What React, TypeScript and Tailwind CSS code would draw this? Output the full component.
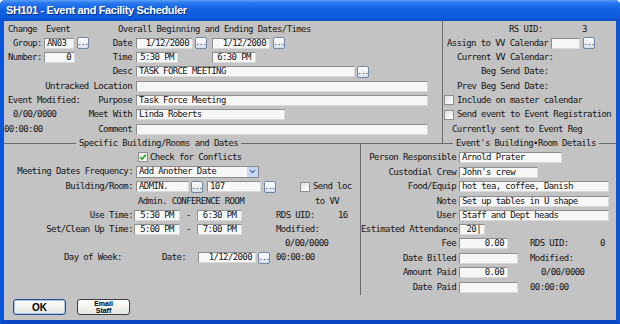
import { ChevronDown } from "lucide-react";
import type { ReactNode } from "react";

// shared text style for the form body (narrow pixel-like mono)
const mono =
  "font-['DejaVu_Sans_Mono','Liberation_Mono',monospace] text-[9px] leading-[11px] tracking-[-0.6px] text-[#141414] whitespace-nowrap";

function Field({
  className,
  value = "",
  align = "left",
}: {
  className: string;
  value?: string;
  align?: "left" | "right" | "center";
}) {
  const justify =
    align === "right" ? "justify-end pr-[3px]" : align === "center" ? "justify-center" : "justify-start pl-[2px]";
  return (
    <div
      className={`${className} flex h-[11px] shrink-0 items-center overflow-hidden border border-t-[#8c8c8c] border-l-[#8c8c8c] border-r-[#d8d8d8] border-b-[#d8d8d8] bg-[#f7f7f7] ${justify}`}
    >
      {value}
    </div>
  );
}

function Dots({ className = "" }: { className?: string }) {
  return (
    <div
      className={`${className} flex h-[12px] w-[12px] shrink-0 items-end justify-center rounded-[2px] border border-[#6f86a8] bg-gradient-to-b from-white to-[#d7e0ec] pb-[1px] text-[7px] leading-[7px] tracking-[-0.5px]`}
    >
      ...
    </div>
  );
}

function Check({ checked = false, className = "" }: { checked?: boolean; className?: string }) {
  return (
    <div
      className={`${className} flex h-[10px] w-[10px] shrink-0 items-center justify-center border border-[#8f8f8f] bg-gradient-to-br from-[#e4e4e4] to-white`}
    >
      {checked && (
        <svg width="8" height="8" viewBox="0 0 8 8">
          <path d="M1.2 4.2l1.8 1.9 3.8-4.4" stroke="#22a322" strokeWidth="1.6" fill="none" />
        </svg>
      )}
    </div>
  );
}

function Row({ tall = false, className = "", children }: { tall?: boolean; className?: string; children: ReactNode }) {
  return <div className={`${tall ? "h-[15px]" : "h-[14px]"} flex items-center ${className}`}>{children}</div>;
}

function RightLabel({ label, children }: { label: string; children: ReactNode }) {
  return (
    <>
      <span className="w-[95px] shrink-0 text-right">{label}</span>
      <span className="ml-[3px] flex items-center">{children}</span>
    </>
  );
}

export default function App() {
  return (
    <div className="flex h-[324px] w-[620px] flex-col overflow-hidden rounded-t-[5px] bg-[#0b55d8]">
      {/* Title bar */}
      <div className="flex h-[21px] shrink-0 items-center bg-[linear-gradient(to_bottom,#5aa0fa_0%,#2a78ee_14%,#1162e2_45%,#0c5bdc_80%,#0a4dc9_100%)] pl-[6px]">
        <span className="font-['Liberation_Sans',Arial,sans-serif] text-[11px] font-bold tracking-[-0.35px] text-white [text-shadow:1px_1px_0_#0a2f80]">
          SH101 - Event and Facility Scheduler
        </span>
      </div>

      {/* Window body */}
      <div className={`flex flex-1 flex-col border-x-4 border-b-4 border-x-[#0b55d8] border-b-[#0a47c4] bg-[#c3c3c3] ${mono}`}>
        {/* Top section */}
        <div className="flex h-[123px] shrink-0">
          {/* Top left */}
          <div className="w-[438px] shrink-0 pt-[1px]">
            <Row className="pl-[4px]">
              <span className="w-[38px]">Change</span>
              <span className="w-[72px]">Event</span>
              <span>Overall Beginning and Ending Dates/Times</span>
            </Row>
            <Row>
              <div className="flex w-[128px] items-center">
                <span className="w-[40px] pl-[9px]">Group:</span>
                <Field className="w-[30px]" value="AN03" />
                <Dots className="ml-[3px]" />
                <span className="flex-1 text-right">Date</span>
              </div>
              <Field className="ml-[4px] w-[57px]" value="1/12/2000" align="right" />
              <Dots className="ml-[2px]" />
              <Field className="ml-[5px] w-[58px]" value="1/12/2000" align="right" />
              <Dots className="ml-[3px]" />
            </Row>
            <Row>
              <div className="flex w-[128px] items-center">
                <span className="w-[40px] pl-[4px]">Number:</span>
                <Field className="w-[31px]" value="0" align="right" />
                <span className="flex-1 text-right">Time</span>
              </div>
              <Field className="ml-[4px] w-[42px]" value="5:30 PM" align="center" />
              <Field className="ml-[34px] w-[44px]" value="6:30 PM" align="center" />
            </Row>
            <Row tall>
              <span className="w-[128px] text-right">Desc</span>
              <Field className="ml-[4px] w-[219px]" value="TASK FORCE MEETING" />
              <Dots className="ml-[2px]" />
            </Row>
            <Row>
              <span className="w-[128px] text-right">Untracked Location</span>
              <Field className="ml-[4px] w-[292px]" />
            </Row>
            <Row>
              <div className="flex w-[128px] justify-between">
                <span className="pl-[4px]">Event Modified:</span>
                <span>Purpose</span>
              </div>
              <Field className="ml-[4px] w-[292px]" value="Task Force Meeting" />
            </Row>
            <Row tall>
              <div className="flex w-[128px] justify-between">
                <span className="pl-[9px]">0/00/0000</span>
                <span>Meet With</span>
              </div>
              <Field className="ml-[4px] w-[149px]" value="Linda Roberts" />
            </Row>
            <Row>
              <div className="flex w-[128px] justify-between">
                <span>00:00:00</span>
                <span>Comment</span>
              </div>
              <Field className="ml-[4px] w-[292px]" />
            </Row>
          </div>

          {/* Top right */}
          <div className="flex-1 border-l border-[#6b6b6b] pt-[1px]">
            <Row className="pl-[66px]">
              <span className="w-[73px]">RS UID:</span>
              <span>3</span>
            </Row>
            <Row className="pl-[4px]">
              <span>Assign to VV Calendar</span>
              <Field className="ml-[3px] w-[29px]" />
              <Dots className="ml-[3px]" />
            </Row>
            <Row className="pl-[14px]">Current VV Calendar:</Row>
            <Row tall className="pl-[38px]">
              Beg Send Date:
            </Row>
            <Row className="pl-[14px]">Prev Beg Send Date:</Row>
            <Row className="pl-[1px]">
              <Check />
              <span className="ml-[3px]">Include on master calendar</span>
            </Row>
            <Row tall className="pl-[1px]">
              <Check />
              <span className="ml-[3px]">Send event to Event Registration</span>
            </Row>
            <Row className="pl-[9px]">Currently sent to Event Reg</Row>
          </div>
        </div>

        {/* Bottom group boxes */}
        <div className="-mt-[6px] flex h-[157px] shrink-0">
          <fieldset className="h-full w-[356px] shrink-0 border-t border-[#6b6b6b] pt-[1px]">
            <legend className="ml-[72px] px-[3px] leading-[11px]">Specific Building/Rooms and Dates</legend>
            <Row className="pl-[134px]">
              <Check checked />
              <span className="ml-[2px]">Check for Conflicts</span>
            </Row>
            <Row tall>
              <span className="w-[129px] text-right">Meeting Dates Frequency:</span>
              <div className="ml-[3px] flex h-[12px] w-[123px] items-center border border-[#8c8c8c] bg-[#f7f7f7] pl-[2px]">
                <span className="flex-1">Add Another Date</span>
                <div className="flex h-[10px] w-[11px] items-center justify-center rounded-[1px] bg-[#c7d6f7]">
                  <ChevronDown size={9} strokeWidth={3.2} color="#4a5f8f" />
                </div>
              </div>
            </Row>
            <Row tall>
              <span className="w-[129px] text-right">Building/Room:</span>
              <Field className="ml-[3px] w-[53px]" value="ADMIN." />
              <Dots className="ml-[2px]" />
              <Field className="ml-[4px] w-[54px]" value="107" />
              <Dots className="ml-[3px]" />
              <Check className="ml-[24px]" />
              <span className="ml-[3px]">Send loc</span>
            </Row>
            <Row className="pl-[134px]">
              <span className="w-[177px]">Admin. CONFERENCE ROOM</span>
              <span>to VV</span>
            </Row>
            <Row>
              <span className="w-[129px] text-right">Use Time:</span>
              <Field className="ml-[1px] w-[46px]" value="5:30 PM" align="center" />
              <span className="w-[17px] text-center">-</span>
              <Field className="w-[45px]" value="6:30 PM" align="center" />
              <span className="ml-[34px] w-[62px]">RDS UID:</span>
              <span>16</span>
            </Row>
            <Row>
              <span className="w-[129px] text-right">Set/Clean Up Time:</span>
              <Field className="ml-[1px] w-[46px]" value="5:00 PM" align="center" />
              <span className="w-[17px] text-center">-</span>
              <Field className="w-[45px]" value="7:00 PM" align="center" />
              <span className="ml-[34px]">Modified:</span>
            </Row>
            <Row className="pl-[281px]">0/00/0000</Row>
            <Row tall className="pl-[60px]">
              <span className="w-[98px]">Day of Week:</span>
              <span className="w-[36px]">Date:</span>
              <Field className="w-[58px]" value="1/12/2000" align="right" />
              <Dots className="ml-[2px]" />
              <span className="ml-[6px]">00:00:00</span>
            </Row>
          </fieldset>

          <fieldset className="h-full flex-1 border-t border-l border-[#6b6b6b] pt-[1px]">
            <legend className="ml-[92px] px-[3px] leading-[11px]">Event's Building•Room Details</legend>
            <Row tall>
              <RightLabel label="Person Responsible">
                <Field className="w-[103px]" value="Arnold Prater" />
              </RightLabel>
            </Row>
            <Row>
              <RightLabel label="Custodial Crew">
                <Field className="w-[79px]" value="John's crew" />
              </RightLabel>
            </Row>
            <Row tall>
              <RightLabel label="Food/Equip">
                <Field className="w-[150px]" value="hot tea, coffee, Danish" />
              </RightLabel>
            </Row>
            <Row>
              <RightLabel label="Note">
                <Field className="w-[150px]" value="Set up tables in U shape" />
              </RightLabel>
            </Row>
            <Row>
              <RightLabel label="User">
                <Field className="w-[150px]" value="Staff and Dept heads" />
              </RightLabel>
            </Row>
            <Row>
              <RightLabel label="Estimated Attendance">
                <Field className="w-[26px]" value="20|" align="right" />
              </RightLabel>
            </Row>
            <Row tall>
              <RightLabel label="Fee">
                <Field className="w-[49px]" value="0.00" align="right" />
                <span className="ml-[22px] w-[70px]">RDS UID:</span>
                <span>0</span>
              </RightLabel>
            </Row>
            <Row>
              <RightLabel label="Date Billed">
                <Field className="w-[59px]" />
                <span className="ml-[12px]">Modified:</span>
              </RightLabel>
            </Row>
            <Row tall>
              <RightLabel label="Amount Paid">
                <Field className="w-[49px]" value="0.00" align="right" />
                <span className="ml-[33px]">0/00/0000</span>
              </RightLabel>
            </Row>
            <Row>
              <RightLabel label="Date Paid">
                <Field className="w-[59px]" />
                <span className="ml-[12px]">00:00:00</span>
              </RightLabel>
            </Row>
          </fieldset>
        </div>

        {/* Buttons */}
        <div className="flex items-start pt-[4px] font-['Liberation_Sans',Arial,sans-serif] tracking-normal">
          <button className="ml-[9px] flex h-[16px] w-[53px] items-center justify-center rounded-[3px] border border-[#2c4c86] bg-gradient-to-b from-white to-[#e6e6e0] text-[10px] font-bold text-black shadow-[inset_0_0_0_1px_#a9c2ea]">
            OK
          </button>
          <button className="ml-[11px] flex h-[16px] w-[53px] flex-col items-center justify-center rounded-[3px] border border-[#3a3a3a] bg-gradient-to-b from-white to-[#e6e6e0] text-[7px] leading-[7px] font-bold text-black">
            <span>Email</span>
            <span>Staff</span>
          </button>
        </div>
      </div>
    </div>
  );
}
